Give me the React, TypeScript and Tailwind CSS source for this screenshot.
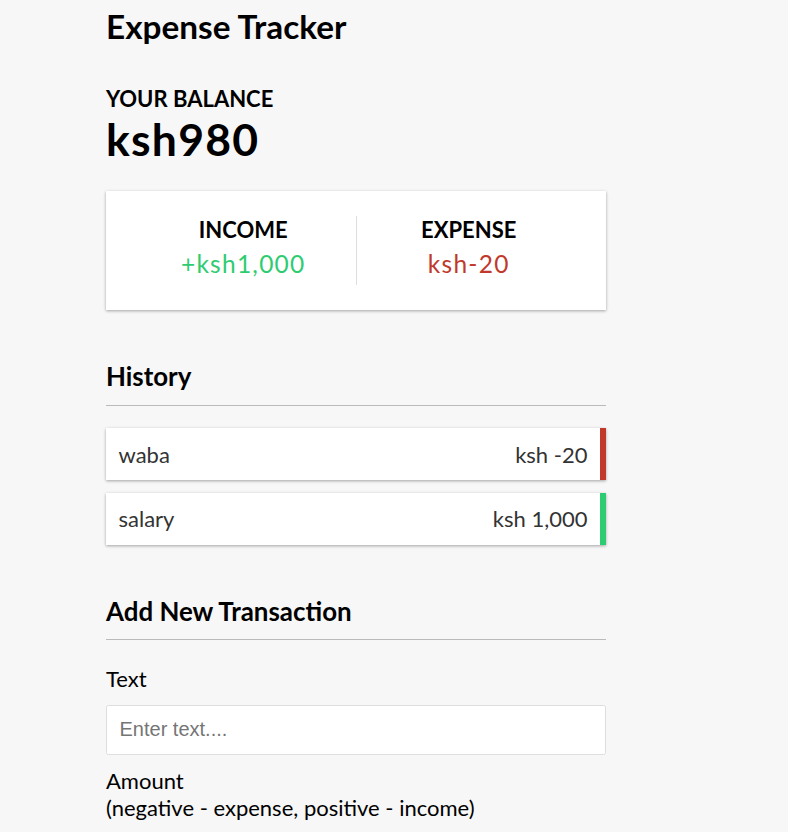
import { useState } from 'react';

type Tx = { id: number; text: string; amount: number };

const initial: Tx[] = [
  { id: 1, text: 'waba', amount: -20 },
  { id: 2, text: 'salary', amount: 1000 },
];

const fmt = (n: number) => n.toLocaleString('en-US');

export default function App() {
  const [transactions] = useState<Tx[]>(initial);
  const [text, setText] = useState('');
  const [amount, setAmount] = useState('');

  const total = transactions.reduce((acc, t) => acc + t.amount, 0);
  const income = transactions.filter((t) => t.amount > 0).reduce((a, t) => a + t.amount, 0);
  const expense = transactions.filter((t) => t.amount < 0).reduce((a, t) => a + t.amount, 0);

  const shadow = 'shadow-[0_1.25px_3.75px_rgba(0,0,0,0.12),0_1.25px_2.5px_rgba(0,0,0,0.24)]';

  return (
    <div className="min-h-screen bg-[#f7f7f7] font-[Lato,sans-serif] text-[22px] text-black">
      <div className="ml-[106px] w-[500px] pt-[7px] pb-[40px]">
        <h2 className="text-[33.3px] font-bold leading-[1.2]">Expense Tracker</h2>

        <h4 className="mt-[38px] h-[27px] text-[22px] font-bold uppercase leading-[27px]">Your Balance</h4>
        <h1 className="text-[44.5px] font-bold leading-[54px] tracking-[1.25px]">ksh{fmt(total)}</h1>

        {/* Income / expense */}
        <div className={`mt-[25px] flex bg-white p-[25px] ${shadow}`}>
          <div className="flex-1 border-r border-[#dedede] text-center">
            <h4 className="font-bold uppercase leading-[27px]">Income</h4>
            <p className="my-[6.25px] text-[24.5px] leading-[30px] tracking-[1.25px] text-[#2ecc71]">
              +ksh{fmt(income)}
            </p>
          </div>
          <div className="flex-1 text-center">
            <h4 className="font-bold uppercase leading-[27px]">Expense</h4>
            <p className="my-[6.25px] text-[24.5px] leading-[30px] tracking-[1.25px] text-[#c0392b]">
              ksh{fmt(expense)}
            </p>
          </div>
        </div>

        {/* History */}
        <h3 className="mt-[50px] border-b border-[#bbb] pb-[12.5px] text-[25.9px] font-bold leading-[32px]">
          History
        </h3>
        <ul className="mt-[22.5px] flex flex-col gap-[12.5px]">
          {transactions.map((t) => (
            <li
              key={t.id}
              className={`flex justify-between bg-white p-[12.5px] leading-[27px] text-[#333] border-r-[6.25px] ${
                t.amount < 0 ? 'border-[#c0392b]' : 'border-[#2ecc71]'
              } ${shadow}`}
            >
              <span>{t.text}</span>
              <span>
                ksh {t.amount < 0 ? '-' : ''}
                {fmt(Math.abs(t.amount))}
              </span>
            </li>
          ))}
        </ul>

        {/* Add transaction */}
        <h3 className="mt-[50px] border-b border-[#bbb] pb-[12.5px] text-[25.9px] font-bold leading-[32px]">
          Add New Transaction
        </h3>
        <form className="mt-[12.5px]" onSubmit={(e) => e.preventDefault()}>
          <div>
            <label className="my-[12.5px] inline-block leading-[27px]">Text</label>
            <input
              type="text"
              value={text}
              onChange={(e) => setText(e.target.value)}
              placeholder="Enter text...."
              className="block w-full rounded-[2.5px] border-[1.25px] border-[#dedede] bg-white p-[12.5px] font-['Liberation_Sans',Arial,sans-serif] text-[20px] leading-[23px] text-black placeholder:text-[#757575] outline-none"
            />
          </div>
          <div>
            <label className="my-[12.5px] inline-block leading-[27px]">
              Amount <br />
              (negative - expense, positive - income)
            </label>
            <input
              type="number"
              value={amount}
              onChange={(e) => setAmount(e.target.value)}
              placeholder="Enter amount...."
              className="block w-full rounded-[2.5px] border-[1.25px] border-[#dedede] bg-white p-[12.5px] font-['Liberation_Sans',Arial,sans-serif] text-[20px] leading-[23px] text-black placeholder:text-[#757575] outline-none"
            />
          </div>
        </form>
      </div>
    </div>
  );
}
